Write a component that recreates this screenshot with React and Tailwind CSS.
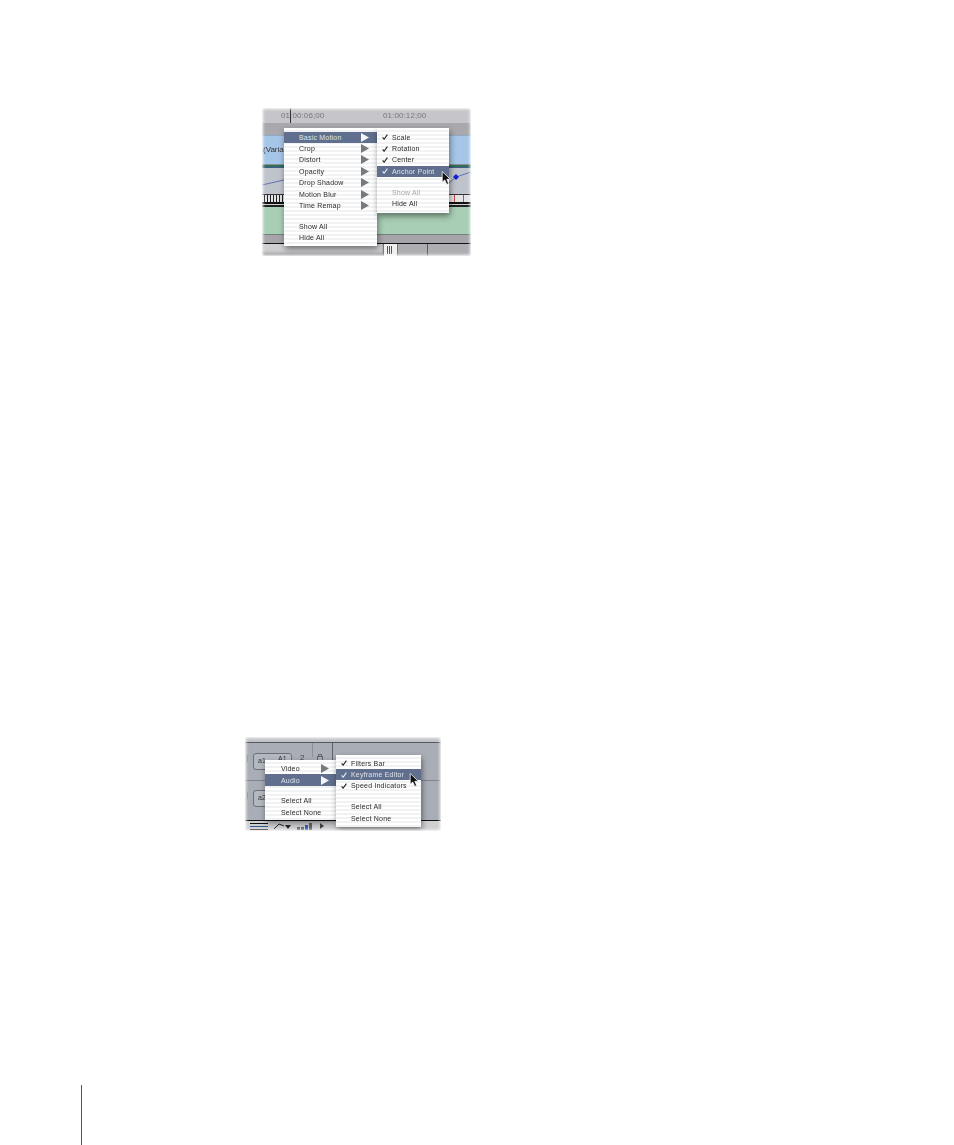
// Page with two soft timeline screenshots and their popup menus
const scan = 'bg-[repeating-linear-gradient(180deg,#ffffff_0px,#ffffff_2px,#f1f2f4_2px,#f1f2f4_4px)]';

function Arrow({ light }) {
  return (
    <svg width="8" height="9" viewBox="0 0 8 9" className="shrink-0">
      <path d="M0 0 L8 4.5 L0 9 Z" fill={light ? '#f4f6fa' : '#77797d'} />
    </svg>
  );
}

function Check({ light }) {
  return (
    <svg width="6" height="6" viewBox="0 0 6 6" className="shrink-0">
      <path d="M0.6 3.4 L2.1 5.2 L5.4 0.6" fill="none" stroke={light ? '#e8ecf2' : '#222'} strokeWidth="1.1" />
    </svg>
  );
}

function Cursor({ className }) {
  return (
    <svg className={`absolute ${className}`} width="11" height="15" viewBox="0 0 10 14">
      <path d="M1 0.5 L1 10.5 L3.4 8.4 L5.2 12.5 L7 11.7 L5.3 7.8 L8.5 7.6 Z" fill="#111111" stroke="#ffffff" strokeWidth="0.7" />
    </svg>
  );
}

// one row of a menu, pl/pr come from the menu that holds it
function Row({ label, active, arrow, check, dim, textLeft, arrowRight }) {
  return (
    <div className={`h-[11.4px] flex items-center ${active ? 'bg-[#5f6f8d] text-[#dfe4ec]' : dim ? 'text-[#a8a8a8]' : 'text-[#2c2c2c]'}`}>
      {check !== undefined && (
        <span className="w-[15px] pl-[5px] flex items-center">{check && <Check light={active} />}</span>
      )}
      <span className={`flex-1 -translate-y-[0.5px] ${textLeft}`}>{label}</span>
      {arrow && <span className={arrowRight}><Arrow light={active} /></span>}
    </div>
  );
}

function Menu({ className, children }) {
  return (
    <div className={`absolute ${scan} shadow-[1px_3px_6px_rgba(0,0,0,0.45)] text-[7px] tracking-[0.2px] leading-none blur-[0.3px] ${className}`}>
      {children}
    </div>
  );
}

function Ticks({ count, color = 'bg-[#222222]', gap = 'gap-[2px]' }) {
  return (
    <div className={`flex ${gap} h-full`}>
      {Array.from({ length: count }).map((_, i) => (
        <span key={i} className={`w-px h-full ${color}`} />
      ))}
    </div>
  );
}

function MotionFigure() {
  const items = ['Crop', 'Distort', 'Opacity', 'Drop Shadow', 'Motion Blur', 'Time Remap'];
  return (
    <div className="relative ml-[262px] mt-[108px] w-[209px] h-[148px] overflow-hidden flex flex-col font-['Liberation_Sans',sans-serif]">
      {/* ruler */}
      <div className="h-[15px] bg-[#c6c6ca] flex items-center text-[8px] tracking-[0.1px] text-[#77777b] blur-[0.4px]">
        <span className="ml-[19px] w-[102px]">01:00:06;00</span>
        <span>01:00:12;00</span>
      </div>
      <div className="h-[12px] bg-[#a9a9ad]" />
      {/* video clip */}
      <div className="h-[29px] bg-[#a6c6e8] border-t border-[#8fa9c6] flex items-center text-[8px] text-[#333333] blur-[0.3px]">
        <span className="ml-px">(Varia</span>
      </div>
      <div className="h-px bg-[#8c9096]" />
      <div className="h-[2px] bg-[#2e6f55]" />
      <div className="h-px bg-[#445a88]" />
      {/* keyframe graph */}
      <div className="h-[26px] bg-[#bfc3cb]" />
      <div className="h-[8px] bg-[#e4e4e6] flex items-center justify-between border-t border-[#333333] blur-[0.3px]">
        <div className="ml-[2px] h-full"><Ticks count={7} /></div>
        <div className="mr-[7px] h-full"><Ticks count={2} color="bg-[#c84a4a]" gap="gap-[8px]" /></div>
      </div>
      <div className="h-[2px] bg-[#111111]" />
      <div className="h-px bg-[#d0d0d0]" />
      <div className="h-[2px] bg-[#222222]" />
      {/* audio clip */}
      <div className="h-[27px] bg-[#a8ceb5]" />
      <div className="h-[9px] bg-[#a6a6aa] border-t border-[#74807a]" />
      <div className="h-px bg-[#111111]" />
      {/* scroller */}
      <div className="flex-1 flex bg-[#aeaeb2]">
        <div className="w-[121px] bg-[#cfcfd2] shadow-[inset_0_-3px_3px_rgba(90,90,90,0.5)]" />
        <div className="w-[15px] bg-[#f0f0f0] border-x border-[#777777] pl-[3px] py-[2px]"><Ticks count={3} color="bg-[#555555]" gap="gap-px" /></div>
        <div className="w-[29px]" />
        <div className="w-px bg-[#8a2fd0]" />
      </div>

      {/* playhead */}
      <div className="absolute left-[28px] top-0 w-px h-[15px] bg-[#333333]" />
      {/* graph line */}
      <svg className="absolute left-0 top-[60px]" width="209" height="30" viewBox="0 0 209 30">
        <path d="M0 17 L22 12" fill="none" stroke="#4a5fa8" strokeWidth="0.8" />
        <path d="M186 16 L194 9 L209 4" fill="none" stroke="#4a5fa8" strokeWidth="0.8" />
        <path d="M194 6 L197 9 L194 12 L191 9 Z" fill="#1420d8" />
      </svg>

      <Menu className="left-[22px] top-[20px] w-[93px] h-[118px] pt-[3.5px]">
        <Row label="Basic Motion" active arrow textLeft="pl-[15px]" arrowRight="pr-[8px]" />
        {items.map(t => <Row key={t} label={t} arrow textLeft="pl-[15px]" arrowRight="pr-[8px]" />)}
        <div className="h-[9.5px]" />
        <Row label="Show All" textLeft="pl-[15px]" />
        <Row label="Hide All" textLeft="pl-[15px]" />
      </Menu>
      <Menu className="left-[115px] top-[20px] w-[72px] h-[85px] pt-[3.5px]">
        <Row label="Scale" check textLeft="" />
        <Row label="Rotation" check textLeft="" />
        <Row label="Center" check textLeft="" />
        <Row label="Anchor Point" check active textLeft="" />
        <div className="h-[9.5px]" />
        <Row label="Show All" check={false} dim textLeft="" />
        <Row label="Hide All" check={false} textLeft="" />
      </Menu>

      <Cursor className="left-[179px] top-[63px]" />
      {/* soft edge of the picture */}
      <div className="absolute inset-0 shadow-[inset_0_0_3px_1px_#ffffff] pointer-events-none" />
    </div>
  );
}

function TrackButton({ label, className }) {
  return (
    <div className={`absolute left-[8px] w-[39px] h-[17px] rounded-[3px] bg-[#b4b8bf] border border-[#6c7078] text-[7px] text-[#333333] px-[4px] leading-[14px] blur-[0.3px] ${className}`}>
      {label}
    </div>
  );
}

function TrackFigure() {
  return (
    <div className="relative ml-[245px] mt-[481px] w-[196px] h-[94px] overflow-hidden flex flex-col font-['Liberation_Sans',sans-serif]">
      <div className="h-[5px] bg-[#c0c2c6]" />
      <div className="h-px bg-[#55585e]" />
      <div className="h-[38px] bg-[#a9adb5] border-b border-[#80848c]" />
      <div className="h-[39px] bg-[#a9adb5]" />
      <div className="h-px bg-[#111111]" />
      {/* bottom bar */}
      <div className="flex-1 bg-[#d0d0d3] flex items-center">
        <div className="ml-[5px] w-[18px] flex flex-col gap-[2px]">
          <span className="h-px bg-[#111111]" />
          <span className="h-px bg-[#2b5c8c]" />
          <span className="h-px bg-[#111111]" />
        </div>
        <svg className="ml-[5px]" width="20" height="8" viewBox="0 0 20 8">
          <path d="M1 7 L6 2 L11 4" fill="none" stroke="#222" strokeWidth="1" />
          <path d="M12 3 L18 3 L15 7 Z" fill="#222" />
        </svg>
        <div className="ml-[4px] flex items-end gap-px h-[7px]">
          <span className="w-[3px] h-[3px] bg-[#666666]" />
          <span className="w-[3px] h-[3px] bg-[#666666]" />
          <span className="w-[3px] h-[5px] bg-[#3a5cc0]" />
          <span className="w-[3px] h-[7px] bg-[#666666]" />
        </div>
        <svg className="ml-[8px]" width="4" height="6" viewBox="0 0 4 6"><path d="M0 0 L4 3 L0 6 Z" fill="#444" /></svg>
      </div>

      {/* track dividers and buttons */}
      <div className="absolute left-[87px] top-[6px] w-px h-[77px] bg-[#5c6068]" />
      <div className="absolute left-[67px] top-[6px] w-px h-[14px] bg-[#8c9098]" />
      <TrackButton label="a1" className="top-[16px]" />
      <TrackButton label="a2" className="top-[53px]" />
      <span className="absolute left-[33px] top-[18px] text-[7px] leading-none text-[#333333] blur-[0.3px]">A1</span>
      <span className="absolute left-[55px] top-[17px] text-[8px] leading-none text-[#444444] blur-[0.3px]">2</span>
      <svg className="absolute left-[72px] top-[17px]" width="6" height="7" viewBox="0 0 6 7">
        <path d="M0.5 2.5 H5.5 V6.5 H0.5 Z M1.5 2.5 V0.5 H4.5 V2.5" fill="none" stroke="#444" strokeWidth="0.7" />
      </svg>
      <div className="absolute left-[-3px] top-[17px] w-[6px] h-[9px] rounded-full border-r border-[#5fa86a]" />
      <div className="absolute left-[-3px] top-[54px] w-[6px] h-[9px] rounded-full border-r border-[#5fa86a]" />

      <Menu className="left-[20px] top-[23px] w-[71px] h-[60px] pt-[3px]">
        <Row label="Video" arrow textLeft="pl-[16px]" arrowRight="pr-[7px]" />
        <Row label="Audio" active arrow textLeft="pl-[16px]" arrowRight="pr-[7px]" />
        <div className="h-[9.5px]" />
        <Row label="Select All" textLeft="pl-[16px]" />
        <Row label="Select None" textLeft="pl-[16px]" />
      </Menu>
      <Menu className="left-[91px] top-[18px] w-[85px] h-[72px] pt-[2.5px]">
        <Row label="Filters Bar" check textLeft="" />
        <Row label="Keyframe Editor" check active textLeft="" />
        <Row label="Speed Indicators" check textLeft="" />
        <div className="h-[9.5px]" />
        <Row label="Select All" check={false} textLeft="" />
        <Row label="Select None" check={false} textLeft="" />
      </Menu>

      <Cursor className="left-[164px] top-[36px]" />
      <div className="absolute inset-0 shadow-[inset_0_0_3px_1px_#ffffff] pointer-events-none" />
    </div>
  );
}

export default function App() {
  return (
    <div className="w-[954px] h-[1145px] bg-white overflow-hidden flex flex-col">
      <MotionFigure />
      <TrackFigure />
      {/* page rule */}
      <div className="ml-[81px] mt-[254px] w-px h-[60px] bg-[#2a6496]" />
    </div>
  );
}
